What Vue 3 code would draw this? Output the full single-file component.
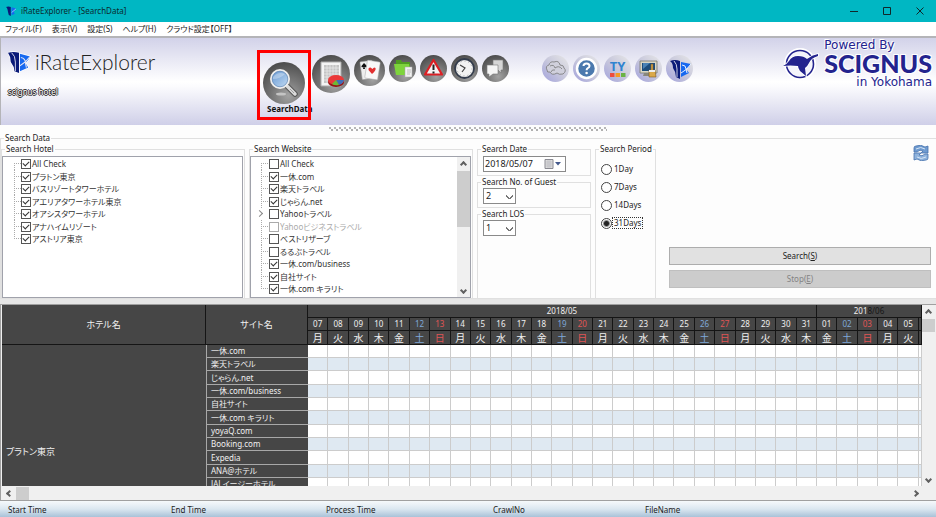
<script setup>
import { ref } from 'vue'

const menus = ['ファイル(F)', '表示(V)', '設定(S)', 'ヘルプ(H)', 'クラウド設定【OFF】']

const hotels = ref([
  { name: 'All Check', on: true },
  { name: 'プラトン東京', on: true },
  { name: 'バスリゾートタワーホテル', on: true },
  { name: 'アエリアタワーホテル東京', on: true },
  { name: 'オアシスタワーホテル', on: true },
  { name: 'アナハイムリゾート', on: true },
  { name: 'アストリア東京', on: true }
])

const sites = ref([
  { name: 'All Check', on: false },
  { name: '一休.com', on: true },
  { name: '楽天トラベル', on: true },
  { name: 'じゃらん.net', on: true },
  { name: 'Yahooトラベル', on: false, parent: true },
  { name: 'Yahooビジネストラベル', on: false, off: true },
  { name: 'ベストリザーブ', on: false },
  { name: 'るるぶトラベル', on: false },
  { name: '一休.com/business', on: true },
  { name: '自社サイト', on: true },
  { name: '一休.com キラリト', on: true }
])

const date = ref('2018/05/07')
const guests = ref('2')
const los = ref('1')
const period = ref('31Days')
const periods = ['1Day', '7Days', '14Days', '31Days']

const week = ['日', '月', '火', '水', '木', '金', '土']
const days = Array.from({ length: 30 }, (_, i) => {
  const d = new Date(2018, 4, 7 + i)
  const w = d.getDay()
  return {
    num: String(d.getDate()).padStart(2, '0'),
    name: week[w],
    tone: w === 0 ? 'sun' : w === 6 ? 'sat' : ''
  }
})

const rows = ['一休.com', '楽天トラベル', 'じゃらん.net', '一休.com/business', '自社サイト', '一休.com キラリト',
  'yoyaQ.com', 'Booking.com', 'Expedia', 'ANA@ホテル', 'JALイージーホテル', '', '', '', '', '']

const status = ['Start Time', 'End Time', 'Process Time', 'CrawlNo', 'FileName']
</script>

<template>
  <div class="window">
    <header class="titlebar">
      <svg class="app-icon" viewBox="0 0 25 25" aria-hidden="true">
        <path d="M0 1Q6-1 12 1V24L7 21Q5 15 4 8Q3 3 0 1Z" fill="#0a1a78" />
        <path d="M14 2L25 5Q24 10 19 13L22 18L14 22Z" fill="#1668f0" />
        <path d="M14 15L25 6" stroke="#d8f0ff" stroke-width="1.500" />
      </svg>
      <span class="title">iRateExplorer - [SearchData]</span>
      <div class="winctl">
        <button type="button" aria-label="Minimize"><svg viewBox="0 0 8 8"><path d="M0 4.500H8" /></svg></button>
        <button type="button" aria-label="Maximize"><svg viewBox="0 0 8 8"><path d="M.5.5H7.500V7.500H.5Z" /></svg></button>
        <button type="button" aria-label="Close"><svg viewBox="0 0 8 8"><path d="M.5.5L7.500 7.500M7.500.5L.5 7.500" /></svg></button>
      </div>
    </header>

    <nav class="menubar">
      <button v-for="m in menus" :key="m" type="button">{{ m }}</button>
    </nav>

    <section class="banner">
      <div class="product">
        <div class="logo">
          <svg viewBox="0 0 25 25" aria-hidden="true">
            <path d="M0 2Q6 0 12 2V24L7 22Q7 17 3 12Q3 6 0 2Z" fill="#0a1a78" stroke="#fff" stroke-width="1.500" paint-order="stroke" />
            <path d="M4 2Q8 5 8 12V22" stroke="#e4e4f2" stroke-width="1" fill="none" />
            <path d="M13 3L24 6Q22 11 19 13L22 18L13 22Z" fill="#1668f0" stroke="#fff" stroke-width="1.500" paint-order="stroke" />
            <path d="M13 16Q20 12 24 6M14 7Q19 8 19 13L20 18" stroke="#e4e4f2" stroke-width="1.200" fill="none" />
          </svg>
          <span>iRateExplorer</span>
        </div>
        <div class="tenant">scignus hotel</div>
      </div>

      <div class="tools">
        <button type="button" class="tool current">
          <svg viewBox="0 0 42 42" aria-hidden="true">
            <defs>
              <radialGradient id="dark" cx=".6" cy=".8" r=".85">
                <stop offset="0" stop-color="#a2a2a2" />
                <stop offset=".5" stop-color="#737373" />
                <stop offset="1" stop-color="#484848" />
              </radialGradient>
              <linearGradient id="pale" x1="0" y1="1" x2="1" y2="0">
                <stop offset="0" stop-color="#a2a2dc" />
                <stop offset=".5" stop-color="#c8c8dc" />
                <stop offset="1" stop-color="#e8e8e8" />
              </linearGradient>
              <linearGradient id="lens" x1="0" y1="0" x2="1" y2="1">
                <stop offset="0" stop-color="#5f92cf" />
                <stop offset="1" stop-color="#c6def5" />
              </linearGradient>
            </defs>
            <circle cx="21" cy="21" r="21" fill="url(#dark)" />
            <ellipse cx="18" cy="32" rx="5" ry="1.500" fill="#c4c4c4" />
            <path d="M24 24L32 32" stroke="#555" stroke-width="5.500" stroke-linecap="round" />
            <path d="M24 24L32 32" stroke="#dcdcdc" stroke-width="3.500" stroke-linecap="round" />
            <path d="M27 27L31 31" stroke="#a0a0a0" stroke-width="1" />
            <circle cx="17" cy="17" r="9" fill="url(#lens)" stroke="#eee" stroke-width="2" />
            <circle cx="17" cy="17" r="7.800" fill="none" stroke="#5b80ac" stroke-width=".6" />
            <path d="M10 15Q15 9 22 12Q17 17 10 17Z" fill="#fff" opacity=".3" />
          </svg>
          <span>SearchData</span>
        </button>
        <button type="button" class="tool large" aria-label="Report">
          <svg viewBox="0 0 38 38" aria-hidden="true">
            <circle cx="19" cy="19" r="19" fill="url(#dark)" />
            <path d="M9 7H29V31H9Z" fill="#f4f4f4" stroke="#aaa" />
            <path d="M12 10H27V28H12Z" fill="#c4c4c4" />
            <path d="M12 13H27M12 16H27M12 19H27M12 22H27M12 25H27M15 10V28M18 10V28M21 10V28M24 10V28" stroke="#eee" stroke-width=".7" />
            <ellipse cx="24" cy="27" rx="8" ry="5" fill="#941414" />
            <ellipse cx="24" cy="25" rx="8" ry="5" fill="#eb3939" />
            <path d="M24 25L32 25Q31 29 27 30Z" fill="#3e6db8" />
            <path d="M24 25L27 30Q23 31 20 29Z" fill="#6abb35" />
          </svg>
        </button>
        <button type="button" class="tool medium" aria-label="Cards">
          <svg viewBox="0 0 31 31" aria-hidden="true">
            <circle cx="15.500" cy="15.500" r="15.500" fill="url(#dark)" />
            <rect x="7" y="6" width="12" height="18" rx="1" fill="#eee" stroke="#999" stroke-width=".5" transform="rotate(-8 13 15)" />
            <path d="M10 8L13 11Q13 13 10.500 12L11 14H9L9.500 12Q7 13 7.500 11Z" fill="#111" />
            <rect x="12" y="6" width="13" height="18" rx="1" fill="#f8f8f8" stroke="#aaa" stroke-width=".5" transform="rotate(9 18 15)" />
            <path d="M18 19L14.500 15Q14 12 16.500 12.500L18.500 14Q20 11.500 21.500 13Q22.500 15 18 19Z" fill="#e23030" />
          </svg>
        </button>
        <button type="button" class="tool" aria-label="Folders">
          <svg viewBox="0 0 27 27" aria-hidden="true">
            <circle cx="13.500" cy="13.500" r="13.500" fill="url(#dark)" />
            <path d="M7 5H12L13 7H21V15H7Z" fill="#4f9d22" />
            <path d="M5 9H20L22 20H7Z" fill="#7ed43c" />
            <path d="M16 12H23V22H16Z" fill="#f1f1f1" stroke="#aaa" stroke-width=".5" />
            <path d="M18 15H22M18 17H22M18 19H21" stroke="#aaa" stroke-width=".7" />
          </svg>
        </button>
        <button type="button" class="tool" aria-label="Alerts">
          <svg viewBox="0 0 27 27" aria-hidden="true">
            <circle cx="13.500" cy="13.500" r="13.500" fill="url(#dark)" />
            <path d="M13.500 5L22 19.500H5Z" fill="#f4f4f4" stroke="#dc1f24" stroke-width="2.200" stroke-linejoin="round" />
            <path d="M13.500 9.500V15M13.500 16.500V18.500" stroke="#222" stroke-width="2" />
          </svg>
        </button>
        <button type="button" class="tool" aria-label="Schedule">
          <svg viewBox="0 0 27 27" aria-hidden="true">
            <circle cx="13.500" cy="13.500" r="13.500" fill="url(#dark)" />
            <circle cx="13.500" cy="13.500" r="9.500" fill="#f2f2f2" stroke="#333c4c" stroke-width="1.800" />
            <circle cx="13.500" cy="13.500" r="7.500" fill="none" stroke="#999" stroke-dasharray="1 2.900" />
            <path d="M9 10L14 13L11 17" stroke="#444" stroke-width="1.200" fill="none" />
          </svg>
        </button>
        <button type="button" class="tool" aria-label="Messages">
          <svg viewBox="0 0 27 27" aria-hidden="true">
            <circle cx="13.500" cy="13.500" r="13.500" fill="url(#dark)" />
            <path d="M11 5H21V15H19V18L16 15H11Z" fill="#d6d6d6" stroke="#777" stroke-width=".6" />
            <path d="M5 10H16V19H11L7 22V19H5Z" fill="#f5f5f5" stroke="#777" stroke-width=".6" />
          </svg>
        </button>
      </div>

      <div class="tools second">
        <button type="button" class="tool" aria-label="Cloud">
          <svg viewBox="0 0 27 27" aria-hidden="true">
            <circle cx="13.500" cy="13.500" r="13.500" fill="url(#pale)" />
            <path d="M5 15Q3 11 7 10Q8 6 12 7Q17 5 18 10Q22 10 22 13Q25 16 21 19Q17 20 15 18Q10 21 8 17Q5 18 5 15ZM8 11Q12 9 13 13Q17 10 20 14M9 17Q10 14 13 15" fill="#d0d0dc" stroke="#777" stroke-width=".8" />
          </svg>
        </button>
        <button type="button" class="tool" aria-label="Help">
          <svg viewBox="0 0 27 27" aria-hidden="true">
            <circle cx="13.500" cy="13.500" r="13.500" fill="url(#pale)" />
            <circle cx="13.500" cy="13.500" r="9.500" fill="#4b79ae" stroke="#fff" stroke-width="2.500" />
            <path d="M10.500 11Q10.500 8.500 13.500 8.500Q16.500 8.500 16.500 11Q16.500 12.500 14.800 13.200Q13.600 13.800 13.600 15.200" stroke="#fff" stroke-width="2" fill="none" />
            <circle cx="13.600" cy="18" r="1.300" fill="#fff" />
          </svg>
        </button>
        <button type="button" class="tool" aria-label="TY">
          <svg viewBox="0 0 27 27" aria-hidden="true">
            <circle cx="13.500" cy="13.500" r="13.500" fill="url(#pale)" />
            <text x="13.500" y="16" text-anchor="middle" class="ty">TY</text>
            <path d="M6 18H10.500V22H6Z" fill="#ee4c3c" />
            <path d="M11.500 18H16V22H11.500Z" fill="#f59a23" />
            <path d="M17 18H21.500V22H17Z" fill="#6ab344" />
          </svg>
        </button>
        <button type="button" class="tool" aria-label="Display">
          <svg viewBox="0 0 27 27" aria-hidden="true">
            <circle cx="13.500" cy="13.500" r="13.500" fill="url(#pale)" />
            <path d="M5 6H22V18H5Z" fill="#d9d6c4" stroke="#77776c" stroke-width=".8" />
            <path d="M7 8H20V16H7Z" fill="#1d4e7c" />
            <path d="M8 8H15L8 14Z" fill="#4a83b5" />
            <path d="M9 18H16V21H8Z" fill="#88877c" />
            <path d="M16 9H18V15H20L21 22H14L14 15H16Z" fill="#dba94a" stroke="#7d5a22" stroke-width=".6" />
            <path d="M14 15H20V17H14Z" fill="#eee" />
          </svg>
        </button>
        <button type="button" class="tool" aria-label="iRate">
          <svg viewBox="0 0 27 27" aria-hidden="true">
            <circle cx="13.500" cy="13.500" r="13.500" fill="url(#pale)" />
            <path d="M4 6Q9 4 14 6V24L10 22Q10 17 7 13Q7 8 4 6Z" fill="#0a1a78" />
            <path d="M8 6Q11 9 11 14V22" stroke="#fff" stroke-width=".8" fill="none" />
            <path d="M15 7L25 9Q23 13 20 14L23 18L15 22Z" fill="#1668f0" />
            <path d="M15 18Q21 15 25 9M16 10Q20 10 20 14L21 18" stroke="#fff" stroke-width=".9" fill="none" />
          </svg>
        </button>
      </div>

      <div class="brand">
        <svg viewBox="0 0 36 32" aria-hidden="true">
          <circle cx="17" cy="16" r="14.500" fill="#f4f4fb" stroke="#fff" stroke-width="3" />
          <circle cx="17" cy="16" r="13.500" fill="none" stroke="#23238e" stroke-width="1.600" />
          <path d="M0 18Q4 16 6 13Q9 8 15 8Q21 8 24 11Q29 7 35 6V8Q28 10 26 15Q24 19 22 20L23 28L17 23Q15 20 15 18Q7 17 0 18Z" fill="#23238e" stroke="#fff" stroke-width="1.500" paint-order="stroke" />
        </svg>
        <div class="brand-text">
          <span class="small">Powered By</span>
          <strong>SCIGNUS</strong>
          <span class="small last">in Yokohama</span>
        </div>
      </div>
    </section>

    <div class="grip"></div>

    <fieldset class="search">
      <legend>Search Data</legend>

      <fieldset class="group">
        <legend>Search Hotel</legend>
        <div class="box">
          <ul class="tree">
            <li v-for="h in hotels" :key="h.name">
              <label><input v-model="h.on" type="checkbox" /><span>{{ h.name }}</span></label>
            </li>
          </ul>
        </div>
      </fieldset>

      <fieldset class="group">
        <legend>Search Website</legend>
        <div class="box">
          <ul class="tree deep">
            <li v-for="s in sites" :key="s.name" :class="{ parent: s.parent, off: s.off }">
              <label><input v-model="s.on" type="checkbox" :disabled="s.off" /><span>{{ s.name }}</span></label>
            </li>
          </ul>
          <div class="vbar">
            <i class="arrow up"></i>
            <div class="thumb tall"></div>
            <i class="arrow down"></i>
          </div>
        </div>
      </fieldset>

      <div class="criteria">
        <fieldset class="group">
          <legend><label for="date">Search Date</label></legend>
          <div class="date">
            <input id="date" v-model="date" type="text" />
            <button type="button" aria-label="Open calendar">
              <svg viewBox="0 0 18 10">
                <path d="M1 .5H9V9.500H1Z" fill="#ddd" stroke="#8a8a92" />
                <path d="M2 3H8M2 5H8M2 7H8M4 1V9M6 1V9" stroke="#b5b5bd" stroke-width=".6" />
                <path d="M11 3H17L14 6.500Z" fill="#44598c" />
              </svg>
            </button>
          </div>
        </fieldset>
        <fieldset class="group">
          <legend><label for="guests">Search No. of Guest</label></legend>
          <select id="guests" v-model="guests"><option>1</option><option>2</option></select>
        </fieldset>
        <fieldset class="group grow">
          <legend><label for="los">Search LOS</label></legend>
          <select id="los" v-model="los"><option>1</option><option>2</option></select>
        </fieldset>
      </div>

      <fieldset class="group">
        <legend>Search Period</legend>
        <div class="periods">
          <label v-for="p in periods" :key="p">
            <input v-model="period" type="radio" name="period" :value="p" /><span>{{ p }}</span>
          </label>
        </div>
      </fieldset>

      <div class="actions">
        <button type="button" class="refresh" aria-label="Refresh">
          <svg viewBox="0 0 16 16">
            <path d="M1 7V3Q1 1 3 1Q8-1 12 2L15 1V8H8L10 6Q7 4 4 7Z" fill="#6f9bd0" stroke="#4672ad" stroke-width=".8" />
            <path d="M15 9V13Q15 15 13 15Q8 17 4 14L1 15V8H8L6 10Q9 12 12 9Z" fill="#8fb3dd" stroke="#4672ad" stroke-width=".8" />
            <path d="M3 4Q8 1 12 4M13 12Q8 15 4 12" stroke="#d6e5f5" fill="none" />
          </svg>
        </button>
        <button type="button" class="act">Search(<u>S</u>)</button>
        <button type="button" class="act" disabled>Stop(<u>E</u>)</button>
      </div>
    </fieldset>

    <div class="splitter"></div>

    <section class="grid">
      <div class="viewport">
        <table>
          <colgroup>
            <col class="c-hotel" /><col class="c-site" />
            <col v-for="(d, i) in days" :key="i" />
            <col class="c-tail" />
          </colgroup>
          <thead>
            <tr>
              <th rowspan="3">ホテル名</th>
              <th rowspan="3">サイト名</th>
              <th colspan="25">2018/05</th>
              <th colspan="6">201<span class="shade">8/06</span></th>
            </tr>
            <tr>
              <th v-for="(d, i) in days" :key="i" :class="d.tone">{{ d.num }}</th>
              <th></th>
            </tr>
            <tr>
              <th v-for="(d, i) in days" :key="i" class="wd" :class="d.tone">{{ d.name }}</th>
              <th></th>
            </tr>
          </thead>
          <tbody>
            <tr v-for="(r, i) in rows" :key="i">
              <th v-if="i === 0" :rowspan="rows.length" class="hotel">プラトン東京</th>
              <th class="site">{{ r }}</th>
              <td v-for="n in 31" :key="n"></td>
            </tr>
          </tbody>
        </table>
      </div>
      <div class="vbar wide">
        <i class="arrow up"></i>
        <div class="thumb"></div>
        <i class="arrow down"></i>
      </div>
      <div class="hbar">
        <i class="arrow left"></i>
        <div class="thumb"></div>
        <i class="arrow right"></i>
      </div>
    </section>

    <footer class="status">
      <span v-for="s in status" :key="s">{{ s }}</span>
    </footer>
  </div>
</template>

<style>
body {
  background: #fff;
}
</style>

<style scoped>
.window {
  display: flex;
  flex-direction: column;
  height: 100vh;
  overflow: hidden;
  font-family: "Noto Sans", "Noto Sans CJK JP", sans-serif;
  font-size: 8px;
  line-height: 10px;
  font-feature-settings: "palt";
  color: #222;
  background: #fdfdfd;
}
.window *,
.window *::before,
.window *::after {
  box-sizing: border-box;
}
button,
input,
select {
  font: inherit;
  font-feature-settings: inherit;
  color: inherit;
  margin: 0;
  padding: 0;
  border: 0;
  background: none;
}
svg {
  display: block;
}

/* title bar */
.titlebar {
  flex: none;
  display: flex;
  align-items: center;
  gap: 5px;
  height: 22px;
  padding-left: 6px;
  background: #00b7c3;
  color: #0b2b2e;
}
.app-icon {
  width: 10px;
  height: 11px;
}
.winctl {
  margin-left: auto;
  display: flex;
}
.winctl button {
  width: 33px;
  height: 20px;
  display: grid;
  place-items: center;
}
.winctl svg {
  width: 8px;
  height: 8px;
  fill: none;
  stroke: #10282a;
}
.menubar {
  flex: none;
  display: flex;
  gap: 10px;
  height: 14px;
  padding-left: 5px;
  background: #fff;
}

/* banner */
.banner {
  flex: none;
  display: flex;
  align-items: flex-start;
  height: 89px;
  border-top: 2px solid #b4b4b8;
  border-left: 1px solid #b4b4b8;
  background: linear-gradient(#d2d2e9, #fff 50%, #fcfcfe 55%, #cfcfe8);
}
.product {
  width: 256px;
  padding: 10px 0 0 7px;
}
.logo {
  display: flex;
  align-items: center;
  gap: 4px;
  height: 28px;
  font: 300 21px/28px Lato, sans-serif;
  color: #222;
}
.logo svg {
  width: 23px;
  height: 23px;
}
.tenant {
  margin-top: 10px;
  line-height: 12px;
  color: #fff;
  text-shadow: 1px 0 #222, -1px 0 #222, 0 1px #222, 0 -1px #222;
}
.tools {
  display: flex;
  gap: 4px;
  padding-top: 17px;
}
.tool {
  align-self: flex-start;
}
.tool svg {
  width: 27px;
  height: 27px;
}
.tool.current {
  position: relative;
  width: 54px;
  height: 70px;
  margin: -5px -3px 0 0;
  padding: 6px 0 0 6px;
  font-weight: 700;
  text-align: left;
  color: #111;
}
.tool.current::after {
  content: "";
  position: absolute;
  inset: 0;
  border: 3px solid #f00;
}
.tool.current svg {
  width: 42px;
  height: 42px;
}
.tool.current span {
  display: block;
  padding-left: 4px;
  white-space: nowrap;
}
.tool.large svg {
  width: 38px;
  height: 38px;
}
.tool.medium svg {
  width: 31px;
  height: 31px;
}
.tools.second {
  margin-left: 33px;
}
.ty {
  font: 700 13px "Open Sans", sans-serif;
  fill: #2f83d0;
}
.brand {
  display: flex;
  gap: 5px;
  margin-left: auto;
  padding: 1px 4px 0 0;
  color: #23238e;
}
.brand > svg {
  width: 36px;
  height: 32px;
  margin-top: 9px;
}
.brand-text {
  display: flex;
  flex-direction: column;
}
.brand .small {
  font: 12px/12px "DejaVu Sans", sans-serif;
  text-shadow: 1px 1px #fff, -1px -1px #fff;
}
.brand .last {
  align-self: flex-end;
}
.brand strong {
  font: 900 25px/25px Lato, sans-serif;
  text-shadow: 1px 1px #fff, -1px -1px #fff, 1px -1px #fff, -1px 1px #fff;
}

/* grip */
.grip {
  flex: none;
  align-self: center;
  width: 278px;
  height: 8px;
  background:
    linear-gradient(90deg, #b8b8b8 2px, transparent 2px) 0 2px / 5px 2px repeat-x,
    linear-gradient(90deg, #b0b0b0 2px, transparent 2px) 2px 4px / 5px 2px repeat-x;
}

/* search area */
fieldset {
  margin: 0;
  padding: 0;
  min-width: 0;
  border: 1px solid #e0e0e0;
}
legend {
  margin-left: 3px;
  padding: 0 1px;
}
.search {
  flex: none;
  display: grid;
  grid-template-columns: 244fr 224fr 114px 61px 271fr;
  gap: 4px;
  height: 166px;
  padding: 1px 5px 0 0;
  border-right: 0;
}
.group {
  display: flex;
  flex-direction: column;
}
.box {
  display: flex;
  height: 142px;
  margin: 2px 1px 0 0;
  border: 1px solid #a0a2ab;
  background: #fff;
  overflow: hidden;
}
.tree {
  flex: 1;
  align-self: flex-start;
  margin: 0;
  padding: 0 0 0 11px;
  list-style: none;
  white-space: nowrap;
  color: #333;
}
.tree li {
  position: relative;
  height: 13px;
  padding-left: 7px;
}
.tree li:nth-child(even) {
  height: 12px;
}
.tree li::before {
  content: "";
  position: absolute;
  left: 0;
  top: 0;
  width: 7px;
  height: 7px;
  border-left: 1px dotted #aaa;
  border-bottom: 1px dotted #aaa;
}
.tree li:first-child::before {
  border-left: 0;
}
.tree li:not(:last-child)::after {
  content: "";
  position: absolute;
  left: 0;
  top: 6px;
  height: 7px;
  border-left: 1px dotted #aaa;
}
.tree.deep {
  padding-left: 10px;
}
.tree.deep li {
  padding-left: 8px;
}
.tree .parent::before {
  left: -4px;
  top: 4px;
  width: 5px;
  height: 5px;
  border: solid #888;
  border-width: 1px 1px 0 0;
  transform: rotate(45deg);
}
.tree .parent::after {
  visibility: hidden;
}
.tree label {
  display: flex;
  align-items: center;
  gap: 1px;
  height: 13px;
}
.tree input {
  appearance: none;
  position: relative;
  width: 10px;
  height: 10px;
  border: 1px solid #555;
  background: #fff;
}
.tree input:checked::before {
  content: "";
  position: absolute;
  left: 1px;
  top: 1px;
  width: 6px;
  height: 4px;
  border: solid #333;
  border-width: 0 0 1px 1px;
  transform: rotate(-45deg);
}
.tree .off {
  color: #aaa;
}
.tree .off input {
  border-color: #aaa;
}

/* scroll bars */
.vbar {
  width: 13px;
  display: flex;
  flex-direction: column;
  align-items: center;
  background: #f0f0f0;
}
.arrow {
  flex: none;
  width: 14px;
  height: 14px;
  display: grid;
  place-items: center;
}
.arrow::before {
  content: "";
  width: 5px;
  height: 5px;
  border: solid #606060;
  border-width: 2px 0 0 2px;
  transform: rotate(45deg);
}
.arrow.down::before {
  transform: rotate(225deg);
}
.arrow.left::before {
  transform: rotate(-45deg);
}
.arrow.right::before {
  transform: rotate(135deg);
}
.vbar .down {
  margin-top: auto;
}
.thumb {
  width: 13px;
  height: 13px;
  background: #cdcdcd;
}
.thumb.tall {
  height: 56px;
}

/* criteria */
.criteria {
  display: flex;
  flex-direction: column;
  gap: 1px;
}
.criteria .grow {
  flex: 1;
}
.criteria .group {
  padding-bottom: 3px;
}
.date {
  display: flex;
  align-items: center;
  width: 83px;
  height: 16px;
  margin: 2px 0 0 5px;
  border: 1px solid #8a8a8a;
  background: #fff;
}
.date input {
  flex: 1;
  min-width: 0;
  padding-left: 1px;
  font-size: 9px;
}
.date svg {
  width: 18px;
  height: 10px;
  margin-right: 3px;
}
select {
  appearance: none;
  width: 33px;
  height: 16px;
  margin: 1px 0 0 5px;
  padding-left: 2px;
  border: 1px solid #8a8a8a;
  background:
    linear-gradient(45deg, transparent 2px, #777 2px 3px, transparent 3px) 22px 6px / 4px 4px no-repeat,
    linear-gradient(-45deg, transparent 2px, #777 2px 3px, transparent 3px) 25px 6px / 4px 4px no-repeat,
    #fff;
  font-size: 9px;
}
.periods {
  display: flex;
  flex-direction: column;
  gap: 6px;
  padding: 9px 0 0 5px;
}
.periods label {
  display: flex;
  align-items: center;
  gap: 1px;
  height: 12px;
}
.periods input {
  appearance: none;
  width: 11px;
  height: 11px;
  border: 1px solid #444;
  border-radius: 50%;
  background: #fff;
}
.periods input:checked {
  background: radial-gradient(#222 0 2px, #fff 4px);
}
.periods span {
  padding: 0 1px;
}
.periods input:checked + span {
  outline: 1px dotted #333;
}
.actions {
  display: flex;
  flex-direction: column;
  gap: 5px;
  padding: 1px 0 11px 9px;
}
.refresh {
  align-self: flex-end;
  margin: 0 2px auto 0;
}
.refresh svg {
  width: 16px;
  height: 16px;
}
.act {
  height: 18px;
  border: 1px solid #adadad;
  background: #e1e1e1;
}
.act:disabled {
  border-color: #bfbfbf;
  background: #ccc;
  color: #838383;
}
.splitter {
  flex: none;
  height: 6px;
  border-bottom: 1px solid #a0a0a0;
  background: #e6e6e6;
}

/* rate grid */
.grid {
  flex: 1;
  min-height: 0;
  display: grid;
  grid-template-columns: 1fr 14px;
  grid-template-rows: 1fr 14px;
  padding-left: 1px;
  border-left: 1px solid #a0a0a0;
  border-bottom: 1px solid #a0a0a0;
  background: #f0f0f0;
}
.viewport {
  min-height: 0;
  overflow: hidden;
  background: #fff;
}
table {
  table-layout: fixed;
  width: 100%;
  border-collapse: separate;
  border-spacing: 0;
}
.c-hotel {
  width: 204px;
}
.c-site {
  width: 102px;
}
.c-tail {
  width: 3px;
}
tr {
  height: 13px;
}
tr:nth-child(3n) {
  height: 14px;
}
th,
td {
  padding: 0;
  line-height: 12px;
  overflow: hidden;
  white-space: nowrap;
}
th {
  font-weight: 400;
  background: #464646;
  color: #f0f0f0;
}
thead th {
  border-right: 1px solid #151515;
  border-bottom: 1px solid #151515;
}
thead th[rowspan] {
  font-size: 9px;
}
.wd {
  font-size: 10px;
}
thead .sat {
  color: #7fa8d8;
}
thead .sun {
  color: #e05555;
}
.shade {
  color: #161616;
}
.hotel {
  padding-left: 4px;
  text-align: left;
  font-size: 9px;
}
.site {
  padding-left: 4px;
  text-align: left;
  border-left: 1px solid #a8a8a8;
  border-bottom: 1px solid #a8a8a8;
}
td {
  border-right: 1px solid #ccc;
  border-bottom: 1px solid #ccc;
}
tbody tr:nth-child(even) td {
  background: #dfe9f2;
}
.hbar {
  grid-column: 1 / -1;
  display: flex;
  align-items: center;
  padding-right: 14px;
}
.hbar .right {
  margin-left: auto;
}

/* status bar */
.status {
  flex: none;
  display: grid;
  grid-template-columns: 163fr 155fr 167fr 152fr 291fr;
  align-items: center;
  height: 16px;
  padding: 2px 0 0 8px;
  background: linear-gradient(#f6f9fb, #dbe7f0 50%, #a9c2d8);
}
</style>
